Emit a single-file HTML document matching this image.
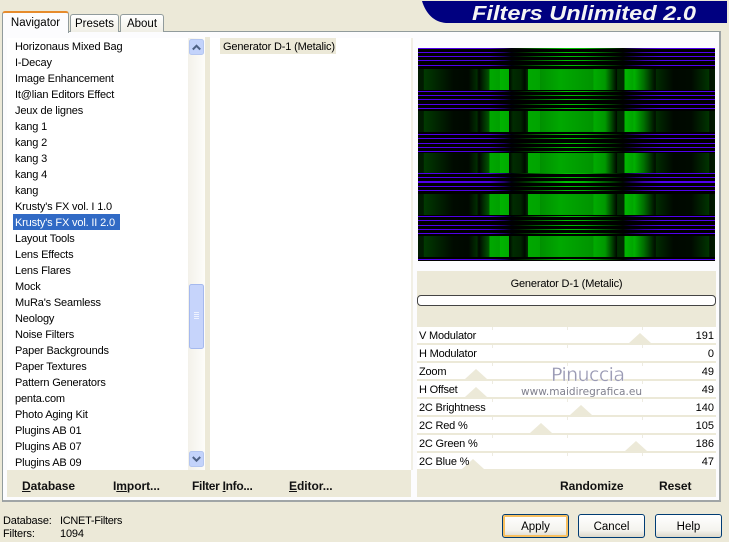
<!DOCTYPE html>
<html><head><meta charset="utf-8">
<style>
*{box-sizing:border-box}
html,body{margin:0;padding:0;width:729px;height:542px;overflow:hidden;background:#ece9d8;font-family:"Liberation Sans",sans-serif;font-size:11px;color:#000}
.a{position:absolute}
.t{position:absolute;white-space:nowrap;line-height:16px;height:16px;font-size:11px;letter-spacing:-.16px;margin-top:1px}
.b{position:absolute;white-space:nowrap;font-weight:bold;font-size:12px;line-height:16px;top:478px;color:#111;letter-spacing:-.05px}
.tab{position:absolute;background:linear-gradient(#fff,#f0efe6);border:1px solid #919b9c;border-bottom:none;border-radius:3px 3px 0 0;text-align:center;font-size:11.5px}
.row{position:absolute;left:417px;width:299px;height:16px;background:#fff}
.row .l{position:absolute;left:2px;top:1px;line-height:16px;font-size:11px;letter-spacing:-.2px}
.row .v{position:absolute;right:2px;top:1px;line-height:16px;font-size:11px}
.row .k{position:absolute;width:1px;height:3px;background:#eeece2;top:0}
.tri{position:absolute;bottom:0;width:0;height:0;border-left:11px solid transparent;border-right:11px solid transparent;border-bottom:10px solid #ece9d8}
.btn{position:absolute;top:514px;width:67px;height:24px;border:1px solid #003c74;border-radius:3px;background:linear-gradient(#fff,#f4f3ee 70%,#dcd8ca);text-align:center;line-height:24px;font-size:11.5px}
</style></head><body>

<!-- header logo -->
<svg class="a" style="left:420px;top:0" width="309" height="26">
<path d="M2 1H307V23H26C14 22 6 14 2 1Z" fill="#000080"/>
<text x="52" y="20" font-family="Liberation Sans" font-weight="bold" font-style="italic" font-size="20" fill="#f4f4f4" textLength="224" lengthAdjust="spacingAndGlyphs">Filters Unlimited 2.0</text>
</svg>

<!-- main panel -->
<div class="a" style="left:2px;top:31px;width:719px;height:471px;background:#fcfcfe;border:1px solid #919b9c;border-right:2px solid #a0a5a6;border-bottom:2px solid #a0a5a6"></div>

<!-- tabs -->
<div class="tab" style="left:70px;top:14px;width:49px;height:18px;line-height:19px">Presets</div>
<div class="tab" style="left:120px;top:14px;width:44px;height:18px;line-height:19px">About</div>
<div class="tab" style="left:2px;top:11px;width:67px;height:22px;line-height:21px;background:#fcfcfe;border-top:2px solid #e68b2c;border-bottom:none">Navigator</div>

<!-- left list -->
<div class="a" style="left:7px;top:38px;width:181px;height:432px;background:#fff"></div>
<div class="a" style="left:13px;top:214px;width:107px;height:16px;background:#316ac5"></div>
<div class="t" style="left:15px;top:38px">Horizonaus Mixed Bag</div>
<div class="t" style="left:15px;top:54px">I-Decay</div>
<div class="t" style="left:15px;top:70px">Image Enhancement</div>
<div class="t" style="left:15px;top:86px">It@lian Editors Effect</div>
<div class="t" style="left:15px;top:102px">Jeux de lignes</div>
<div class="t" style="left:15px;top:118px">kang 1</div>
<div class="t" style="left:15px;top:134px">kang 2</div>
<div class="t" style="left:15px;top:150px">kang 3</div>
<div class="t" style="left:15px;top:166px">kang 4</div>
<div class="t" style="left:15px;top:182px">kang</div>
<div class="t" style="left:15px;top:198px">Krusty's FX vol. I 1.0</div>
<div class="t" style="left:15px;top:214px;color:#fff">Krusty's FX vol. II 2.0</div>
<div class="t" style="left:15px;top:230px">Layout Tools</div>
<div class="t" style="left:15px;top:246px">Lens Effects</div>
<div class="t" style="left:15px;top:262px">Lens Flares</div>
<div class="t" style="left:15px;top:278px">Mock</div>
<div class="t" style="left:15px;top:294px">MuRa's Seamless</div>
<div class="t" style="left:15px;top:310px">Neology</div>
<div class="t" style="left:15px;top:326px">Noise Filters</div>
<div class="t" style="left:15px;top:342px">Paper Backgrounds</div>
<div class="t" style="left:15px;top:358px">Paper Textures</div>
<div class="t" style="left:15px;top:374px">Pattern Generators</div>
<div class="t" style="left:15px;top:390px">penta.com</div>
<div class="t" style="left:15px;top:406px">Photo Aging Kit</div>
<div class="t" style="left:15px;top:422px">Plugins AB 01</div>
<div class="t" style="left:15px;top:438px">Plugins AB 07</div>
<div class="t" style="left:15px;top:454px">Plugins AB 09</div>

<!-- scrollbar -->
<div class="a" style="left:188px;top:38px;width:17px;height:432px;background:linear-gradient(90deg,#f3f1ea,#fdfdfa)"></div>
<div class="a" style="left:205px;top:37px;width:5px;height:433px;background:#ece9d8"></div>
<svg class="a" style="left:188px;top:38px" width="17" height="432">
<rect x="1.5" y="1.5" width="14" height="15" rx="2" fill="#c3d3fb" stroke="#b4c6f0"/>
<path d="M4.8 11.5L8.5 7.8L12.2 11.5" fill="none" stroke="#4d6185" stroke-width="2"/>
<rect x="1.5" y="246.5" width="14" height="64" rx="2" fill="#c6d4fb" stroke="#a5b9ee"/>
<path d="M6 274.5H11M6 276.5H11M6 278.5H11M6 280.5H11" stroke="#eef2ff" stroke-width="1"/>
<rect x="1.5" y="413.5" width="14" height="15" rx="2" fill="#c3d3fb" stroke="#b4c6f0"/>
<path d="M4.8 419L8.5 422.7L12.2 419" fill="none" stroke="#4d6185" stroke-width="2"/>
</svg>

<!-- middle list -->
<div class="a" style="left:210px;top:38px;width:201px;height:432px;background:#fff"></div>
<div class="a" style="left:220px;top:38px;width:116px;height:16px;background:#ece9d8"></div>
<div class="t" style="left:223px;top:38px">Generator D-1 (Metalic)</div>
<div class="a" style="left:411px;top:38px;width:2px;height:432px;background:#f1efe5"></div>

<!-- preview -->
<svg class="a" style="left:418px;top:48px" width="297" height="213" viewBox="418 48 297 213">
<defs>
<linearGradient id="g" gradientUnits="userSpaceOnUse" x1="418" y1="0" x2="715" y2="0">
<stop offset="0" stop-color="#001a00"/>
<stop offset="0.019" stop-color="#001a00"/>
<stop offset="0.020" stop-color="#003a00"/>
<stop offset="0.065" stop-color="#002400"/>
<stop offset="0.12" stop-color="#000a00"/>
<stop offset="0.17" stop-color="#000800"/>
<stop offset="0.198" stop-color="#002c00"/>
<stop offset="0.205" stop-color="#000800"/>
<stop offset="0.24" stop-color="#005800"/>
<stop offset="0.241" stop-color="#00a800"/>
<stop offset="0.275" stop-color="#00a000"/>
<stop offset="0.276" stop-color="#00b400"/>
<stop offset="0.306" stop-color="#00ac00"/>
<stop offset="0.307" stop-color="#000800"/>
<stop offset="0.32" stop-color="#002c00"/>
<stop offset="0.345" stop-color="#002400"/>
<stop offset="0.36" stop-color="#000800"/>
<stop offset="0.37" stop-color="#003000"/>
<stop offset="0.371" stop-color="#00a800"/>
<stop offset="0.41" stop-color="#00a400"/>
<stop offset="0.411" stop-color="#009000"/>
<stop offset="0.48" stop-color="#00a800"/>
<stop offset="0.59" stop-color="#009400"/>
<stop offset="0.591" stop-color="#00ac00"/>
<stop offset="0.63" stop-color="#009800"/>
<stop offset="0.67" stop-color="#000600"/>
<stop offset="0.671" stop-color="#002c00"/>
<stop offset="0.695" stop-color="#002c00"/>
<stop offset="0.696" stop-color="#00b800"/>
<stop offset="0.725" stop-color="#00a400"/>
<stop offset="0.726" stop-color="#00b400"/>
<stop offset="0.76" stop-color="#007000"/>
<stop offset="0.80" stop-color="#000a00"/>
<stop offset="0.801" stop-color="#002c00"/>
<stop offset="0.86" stop-color="#000800"/>
<stop offset="0.92" stop-color="#000a00"/>
<stop offset="0.98" stop-color="#003400"/>
<stop offset="0.981" stop-color="#001400"/>
<stop offset="1" stop-color="#001a00"/>
</linearGradient>
<linearGradient id="s" gradientUnits="userSpaceOnUse" x1="418" y1="0" x2="715" y2="0">
<stop offset="0" stop-color="#5000f0"/>
<stop offset="0.24" stop-color="#4c00e0"/>
<stop offset="0.29" stop-color="#200070"/>
<stop offset="0.315" stop-color="#000010"/>
<stop offset="0.34" stop-color="#001800"/>
<stop offset="0.40" stop-color="#006000"/>
<stop offset="0.50" stop-color="#00c000"/>
<stop offset="0.56" stop-color="#00b000"/>
<stop offset="0.64" stop-color="#005000"/>
<stop offset="0.69" stop-color="#000800"/>
<stop offset="0.71" stop-color="#100040"/>
<stop offset="0.76" stop-color="#3c00b0"/>
<stop offset="0.82" stop-color="#5000f0"/>
<stop offset="1" stop-color="#5000f0"/>
</linearGradient>
</defs>
<rect x="418" y="48" width="297" height="213" fill="#000"/>
<g fill="url(#g)">
<rect x="418" y="69" width="297" height="21"/>
<rect x="418" y="111" width="297" height="21"/>
<rect x="418" y="153" width="297" height="20"/>
<rect x="418" y="194" width="297" height="21"/>
<rect x="418" y="236" width="297" height="21"/>
</g>
<g fill="url(#s)">
<rect x="418" y="48" width="297" height="1"/><rect x="418" y="52" width="297" height="1"/><rect x="418" y="56" width="297" height="1"/><rect x="418" y="60" width="297" height="1"/><rect x="418" y="65" width="297" height="1"/>
<rect x="418" y="91" width="297" height="1"/><rect x="418" y="95" width="297" height="1"/><rect x="418" y="99" width="297" height="1"/><rect x="418" y="104" width="297" height="1"/><rect x="418" y="108" width="297" height="1"/>
<rect x="418" y="134" width="297" height="1"/><rect x="418" y="138" width="297" height="1"/><rect x="418" y="143" width="297" height="1"/><rect x="418" y="147" width="297" height="1"/><rect x="418" y="151" width="297" height="1"/>
<rect x="418" y="173" width="297" height="1"/><rect x="418" y="177" width="297" height="1"/><rect x="418" y="181" width="297" height="2"/><rect x="418" y="186" width="297" height="1"/><rect x="418" y="190" width="297" height="1"/>
<rect x="418" y="216" width="297" height="1"/><rect x="418" y="220" width="297" height="1"/><rect x="418" y="225" width="297" height="1"/><rect x="418" y="229" width="297" height="1"/><rect x="418" y="233" width="297" height="1"/>
<rect x="418" y="259" width="297" height="1"/>
</g>
</svg>

<!-- params -->
<div class="a" style="left:417px;top:271px;width:299px;height:56px;background:#ece9d8"></div>
<div class="a" style="left:417px;top:276px;width:299px;text-align:center;line-height:16px;font-size:11px;letter-spacing:-.16px">Generator D-1 (Metalic)</div>
<div class="a" style="left:417px;top:295px;width:299px;height:11px;background:#fff;border:1px solid #444;border-radius:4px"></div>

<div class="a" style="left:417px;top:327px;width:299px;height:143px;background:#ece9d8"></div>
<div class="row" style="top:327px"><i class="k" style="left:75px"></i><i class="k" style="left:150px"></i><i class="k" style="left:225px"></i><div class="tri" style="left:212px"></div><div class="l">V Modulator</div><div class="v">191</div></div>
<div class="row" style="top:345px"><i class="k" style="left:75px"></i><i class="k" style="left:150px"></i><i class="k" style="left:225px"></i><div class="l">H Modulator</div><div class="v">0</div></div>
<div class="row" style="top:363px"><i class="k" style="left:75px"></i><i class="k" style="left:150px"></i><i class="k" style="left:225px"></i><div class="tri" style="left:48px"></div><div class="l">Zoom</div><div class="v">49</div></div>
<div class="row" style="top:381px"><i class="k" style="left:75px"></i><i class="k" style="left:150px"></i><i class="k" style="left:225px"></i><div class="tri" style="left:48px"></div><div class="l">H Offset</div><div class="v">49</div></div>
<div class="row" style="top:399px"><i class="k" style="left:75px"></i><i class="k" style="left:150px"></i><i class="k" style="left:225px"></i><div class="tri" style="left:153px"></div><div class="l">2C Brightness</div><div class="v">140</div></div>
<div class="row" style="top:417px"><i class="k" style="left:75px"></i><i class="k" style="left:150px"></i><i class="k" style="left:225px"></i><div class="tri" style="left:113px"></div><div class="l">2C Red %</div><div class="v">105</div></div>
<div class="row" style="top:435px"><i class="k" style="left:75px"></i><i class="k" style="left:150px"></i><i class="k" style="left:225px"></i><div class="tri" style="left:208px"></div><div class="l">2C Green %</div><div class="v">186</div></div>
<div class="row" style="top:453px"><i class="k" style="left:75px"></i><i class="k" style="left:150px"></i><i class="k" style="left:225px"></i><div class="tri" style="left:45px"></div><div class="l">2C Blue %</div><div class="v">47</div></div>

<!-- watermark -->
<svg class="a" style="left:510px;top:360px" width="140" height="42">
<text x="41" y="21" font-family="DejaVu Sans" font-size="19" fill="#9a9ab4" stroke="#fff" stroke-width="0.3" textLength="74" lengthAdjust="spacing">Pinuccia</text>
<text x="11" y="35" font-family="DejaVu Sans" font-size="11" fill="#80808e" textLength="121" lengthAdjust="spacingAndGlyphs">www.maidiregrafica.eu</text>
</svg>

<!-- bottom bars -->
<div class="a" style="left:7px;top:470px;width:404px;height:27px;background:#ece9d8"></div>
<div class="a" style="left:417px;top:470px;width:299px;height:27px;background:#ece9d8"></div>
<div class="b" style="left:22px"><u>D</u>atabase</div>
<div class="b" style="left:113px">I<u>m</u>port...</div>
<div class="b" style="left:192px;letter-spacing:-.3px">Filter <u>I</u>nfo...</div>
<div class="b" style="left:289px"><u>E</u>ditor...</div>
<div class="b" style="left:560px">Randomize</div>
<div class="b" style="left:659px">Reset</div>

<!-- status -->
<div class="t" style="left:3px;top:513px;height:14px;line-height:14px">Database:</div>
<div class="t" style="left:60px;top:513px;height:14px;line-height:14px;letter-spacing:-.3px">ICNET-Filters</div>
<div class="t" style="left:3px;top:526px;height:14px;line-height:14px">Filters:</div>
<div class="t" style="left:60px;top:526px;height:14px;line-height:14px">1094</div>

<!-- buttons -->
<div class="btn" style="left:502px;box-shadow:inset 0 0 0 2px #f8c060">Apply</div>
<div class="btn" style="left:578px">Cancel</div>
<div class="btn" style="left:655px">Help</div>
</body></html>
